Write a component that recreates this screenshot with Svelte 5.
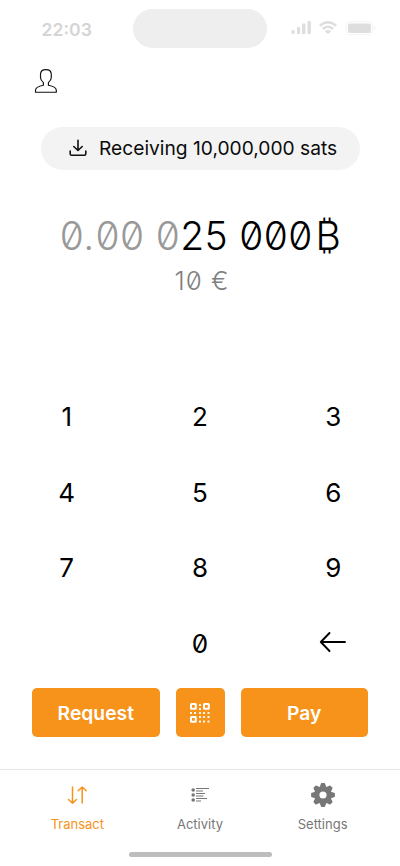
<script>
  const keys = ['1', '2', '3', '4', '5', '6', '7', '8', '9', '', '0', 'back'];
  const finders = [[0, 0], [13, 0], [0, 13]];
  const dots = [
    [9, 1], [9, 5],
    [0, 9], [4, 9], [9, 9], [13, 9], [17.5, 9],
    [9, 13], [13, 13], [17.5, 13],
    [9, 17.5], [13, 17.5], [17.5, 17.5]
  ];
  const teeth = [0, 45, 90, 135, 180, 225, 270, 315];
</script>

<main>
  <header class="status">
    <span class="time">22:03</span>
    <span class="island"></span>
    <svg class="signals" width="86" height="16" viewBox="0 0 86 16">
      <g fill="#dedede">
        <rect x="0.5" y="10" width="3.2" height="4" rx="1" />
        <rect x="6" y="7" width="3.2" height="7" rx="1" />
        <rect x="11" y="3.5" width="3.4" height="10.5" rx="1" />
        <rect x="16.5" y="1" width="3.4" height="13" rx="1" />
        <path d="M33.8 11.2Q37 8.8 40.2 11.2L37.5 13.7Q37 14.2 36.5 13.7Z" />
        <rect x="57" y="3.5" width="23" height="9.5" rx="2" />
      </g>
      <path d="M28.9 5.7Q37 -1.3 45.1 5.7M31.8 9Q37 4.6 42.2 9" fill="none" stroke="#dedede" stroke-width="2.5" />
      <rect x="55.2" y="1.7" width="26.4" height="13" rx="4" fill="none" stroke="#f5f5f5" stroke-width="1.2" />
      <path d="M83 6q3 2.2 0 4.4z" fill="#f1f1f1" />
    </svg>
  </header>

  <div class="profile">
    <svg width="24" height="26" viewBox="0 0 24 26" fill="none" stroke="#111" stroke-width="1.15" stroke-linejoin="round">
      <path d="M9.4 17.2V14.6C7.8 13.2 6.5 11.3 6.5 9.5V6.5C6.5 3.5 8.4 1.6 11.9 1.6S17.3 3.5 17.3 6.5V9.5C17.3 11.3 16 13.2 14.4 14.6V17.2C19.5 18.2 22.3 19.7 22.3 22.2V24.2H1.5V22.2C1.5 19.7 4.3 18.2 9.4 17.2Z" />
    </svg>
  </div>

  <div class="notice">
    <svg width="18" height="18" viewBox="0 0 18 18" fill="none" stroke="#111" stroke-width="1.6" stroke-linecap="round" stroke-linejoin="round">
      <path d="M9 1.2V11M4.8 7.5L9 11.5L13.2 7.5M1.2 12V14.8Q1.2 16.2 2.6 16.2H15.4Q16.8 16.2 16.8 14.8V12" />
    </svg>
    <span>Receiving 10,000,000 sats</span>
  </div>

  <section class="amount">
    <div class="btc"><span class="muted">0<span class="point">.</span>00 0</span>25 000<span class="unit">₿</span></div>
    <div class="fiat">10 €</div>
  </section>

  <section class="keypad">
    {#each keys as key}
      <div class="key">
        {#if key === 'back'}
          <svg class="back" width="28" height="22" viewBox="0 0 28 22" fill="none" stroke="#000" stroke-width="1.9" stroke-linecap="round" stroke-linejoin="round">
            <path d="M26 11H2M10.5 2L1.8 11L10.5 20" />
          </svg>
        {:else}{key}{/if}
      </div>
    {/each}
  </section>

  <section class="actions">
    <div class="button">Request</div>
    <div class="button scan">
      <svg width="20" height="20" viewBox="0 0 20 20">
        {#each finders as [x, y]}
          <rect x={x + 1} y={y + 1} width="4.8" height="4.8" rx=".5" fill="none" stroke="#fff" stroke-width="2" />
        {/each}
        {#each dots as [x, y]}
          <rect {x} {y} width="2" height="2" rx=".5" fill="#fff" />
        {/each}
      </svg>
    </div>
    <div class="button">Pay</div>
  </section>

  <nav>
    <div class="tab active">
      <svg width="26" height="26" viewBox="0 0 26 26" fill="none" stroke="currentColor" stroke-width="1.5" stroke-linecap="round" stroke-linejoin="round">
        <path d="M8.5 5V21M4.5 17.5L8.5 21.3L12.5 17.5M18.2 21V5M14.2 8.7L18.2 5L22.2 8.7" />
      </svg>
      <span>Transact</span>
    </div>
    <div class="tab">
      <svg width="26" height="26" viewBox="0 0 26 26" fill="currentColor">
        {#each [[8, 13, 7], [13, 9, 7.5], [18, 11, 5]] as [y, long, short]}
          <circle cx="6.2" cy={y} r="1.8" />
          <rect x="9" y={y - 2} width={long} height="1" />
          <rect x="9" y={y + 0.5} width={short} height="1" />
        {/each}
      </svg>
      <span>Activity</span>
    </div>
    <div class="tab">
      <svg width="26" height="26" viewBox="0 0 26 26" fill="currentColor">
        {#each teeth as angle}
          <path d="M9.4 6L10.8 2Q11 1.1 11.8 1.1H14.2Q15 1.1 15.2 2L16.6 6Z" transform="rotate({angle} 13 13)" />
        {/each}
        <circle cx="13" cy="13" r="6.2" fill="none" stroke="currentColor" stroke-width="5.2" />
      </svg>
      <span>Settings</span>
    </div>
  </nav>
  <div class="home"></div>
</main>

<style>
  :global(body) { margin: 0; background: #fff; }
  main {
    width: 400px; height: 866px; box-sizing: border-box; overflow: hidden;
    display: flex; flex-direction: column;
    background: #fff; color: #000;
    font-family: Inter, "Liberation Sans", sans-serif;
  }
  svg { display: block; flex: none; }
  .status { height: 56px; display: grid; grid-template-columns: 133px 134px 133px; flex: none; }
  .time { padding: 19px 0 0 41.5px; font-size: 17.6px; line-height: 22px; font-weight: 600; color: #d5d5d5; }
  .island { margin-top: 8.5px; height: 39.5px; border-radius: 20px; background: #eee; }
  .signals { margin: 20px 0 0 24px; }
  .profile { height: 70.5px; padding: 12px 0 0 34px; box-sizing: border-box; flex: none; }
  .notice {
    width: 319px; height: 43px; flex: none; align-self: center; border-radius: 22px; background: #f3f3f3;
    display: flex; align-items: center; padding-left: 28px; gap: 12.5px; box-sizing: border-box;
    font-size: 19.2px; white-space: nowrap; color: #0b0b0b;
  }
  .amount { height: 209px; padding-top: 40.5px; box-sizing: border-box; text-align: center; flex: none; font-weight: 350; font-feature-settings: "zero"; }
  .btc { font-size: 39px; line-height: 52px; letter-spacing: 0.35px; padding-left: 1px; white-space: nowrap; }
  .muted { color: #999; }
  .point { margin-right: 1px; }
  .unit { margin-left: 3px; }
  .fiat { font-size: 26px; line-height: 38px; letter-spacing: 1px; padding-left: 4px; color: #808080; }
  .keypad { display: grid; grid-template-columns: repeat(3, 1fr); grid-auto-rows: 75.7px; flex: none; height: 309.5px; font-feature-settings: "zero"; }
  .key { display: flex; align-items: center; justify-content: center; font-size: 26px; }
  .back { margin-bottom: 3px; }
  .actions { display: flex; gap: 16px; padding: 0 32px; height: 81px; flex: none; }
  .button {
    flex: 1; height: 49px; border-radius: 5px; background: #f7931a; color: #fff;
    display: flex; align-items: center; justify-content: center; font-size: 19.3px; font-weight: 600;
  }
  .button.scan { flex: 0 0 49px; }
  nav { height: 83px; flex: none; border-top: 1px solid #e5e5e5; padding: 12px 16px 0; box-sizing: border-box; display: grid; grid-template-columns: repeat(3, 1fr); }
  .tab { display: flex; flex-direction: column; align-items: center; color: #777; font-size: 13px; line-height: 18px; gap: 7px; }
  .active { color: #f7931a; }
  .home { width: 143px; height: 5px; border-radius: 3px; background: #bdbdbd; align-self: center; flex: none; }
</style>
